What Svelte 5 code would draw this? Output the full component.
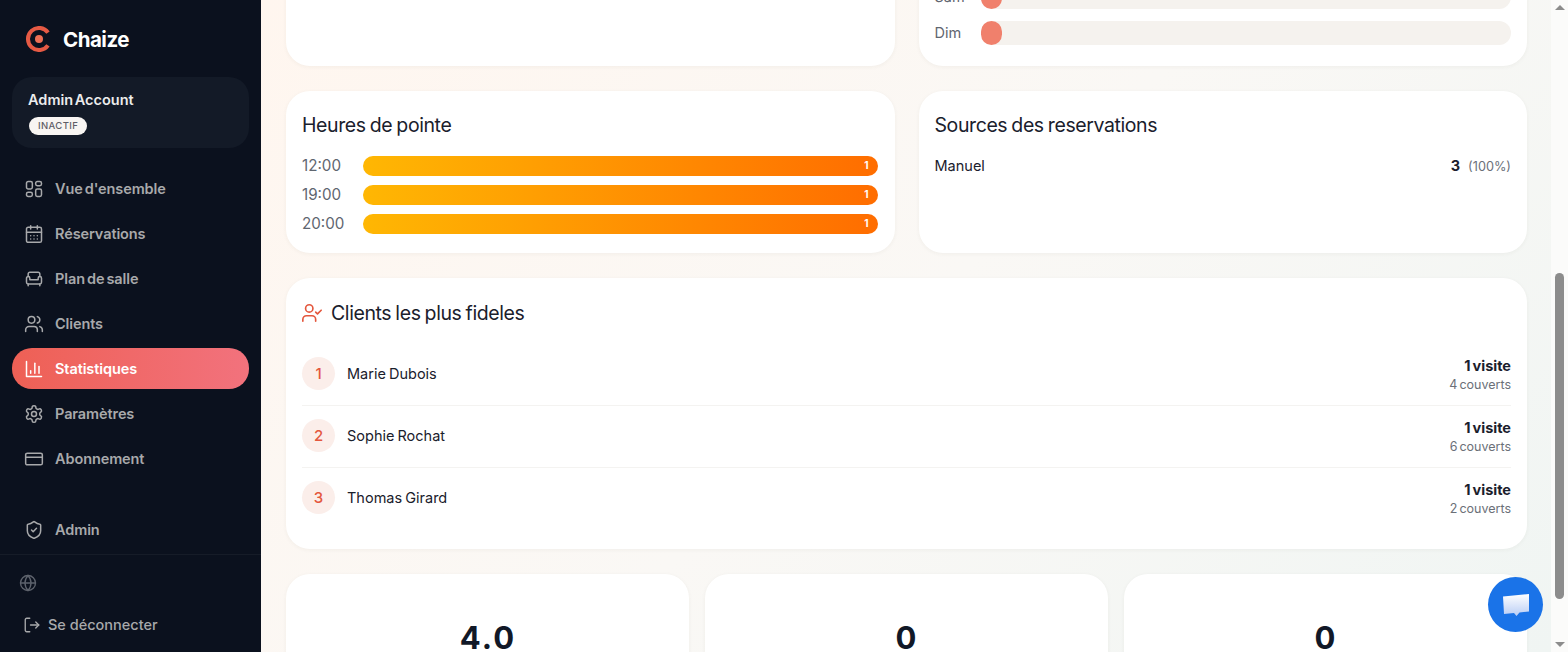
<script>
  const hours = ['12:00', '19:00', '20:00'];
  const clients = [
    { rank: 1, name: 'Marie Dubois', covers: '4 couverts' },
    { rank: 2, name: 'Sophie Rochat', covers: '6 couverts' },
    { rank: 3, name: 'Thomas Girard', covers: '2 couverts' }
  ];
  const nav = [
    { label: "Vue d'ensemble", paths: [], rects: [[3,3,7,9],[14,3,7,5],[14,12,7,9],[3,16,7,5]] },
    { label: 'Réservations', paths: ['M8 2v4','M16 2v4','M3 10h18','M8 14h.01','M12 14h.01','M16 14h.01','M8 18h.01','M12 18h.01','M16 18h.01'], rects: [[3,4,18,18]] },
    { label: 'Plan de salle', paths: ['M19 9V6a2 2 0 0 0-2-2H7a2 2 0 0 0-2 2v3','M3 16a2 2 0 0 0 2 2h14a2 2 0 0 0 2-2v-5a2 2 0 0 0-4 0v2H7v-2a2 2 0 0 0-4 0Z','M5 18v2','M19 18v2'], rects: [] },
    { label: 'Clients', paths: ['M16 21v-2a4 4 0 0 0-4-4H6a4 4 0 0 0-4 4v2','M16 3.13a4 4 0 0 1 0 7.75','M22 21v-2a4 4 0 0 0-3-3.87','M13 7a4 4 0 1 1-8 0 4 4 0 0 1 8 0'], rects: [] },
    { label: 'Statistiques', active: true, paths: ['M3 3v18h18','M18 17V9','M13 17V5','M8 17v-3'], rects: [] },
    { label: 'Paramètres', paths: ['M12.22 2h-.44a2 2 0 0 0-2 2v.18a2 2 0 0 1-1 1.73l-.43.25a2 2 0 0 1-2 0l-.15-.08a2 2 0 0 0-2.73.73l-.22.38a2 2 0 0 0 .73 2.73l.15.1a2 2 0 0 1 1 1.72v.51a2 2 0 0 1-1 1.74l-.15.09a2 2 0 0 0-.73 2.73l.22.38a2 2 0 0 0 2.73.73l.15-.08a2 2 0 0 1 2 0l.43.25a2 2 0 0 1 1 1.73V20a2 2 0 0 0 2 2h.44a2 2 0 0 0 2-2v-.18a2 2 0 0 1 1-1.73l.43-.25a2 2 0 0 1 2 0l.15.08a2 2 0 0 0 2.73-.73l.22-.39a2 2 0 0 0-.73-2.73l-.15-.08a2 2 0 0 1-1-1.74v-.5a2 2 0 0 1 1-1.74l.15-.09a2 2 0 0 0 .73-2.73l-.22-.38a2 2 0 0 0-2.73-.73l-.15.08a2 2 0 0 1-2 0l-.43-.25a2 2 0 0 1-1-1.73V4a2 2 0 0 0-2-2z','M15 12a3 3 0 1 1-6 0 3 3 0 0 1 6 0'], rects: [] },
    { label: 'Abonnement', paths: ['M2 10h20'], rects: [[2,5,20,14]] }
  ];
</script>

<div class="app">
  <aside class="sidebar">
    <div class="brand">
      <svg class="logo" viewBox="0 0 26 26" fill="none">
        <path d="M22 6.7A11 11 0 1 0 22 19.3" stroke="#e65a44" stroke-width="4" />
        <circle cx="13" cy="13" r="4" fill="#ee6f55" />
      </svg>
      <span class="brand-name">Chaize</span>
    </div>
    <div class="account">
      <div class="account-name">Admin Account</div>
      <span class="badge">INACTIF</span>
    </div>
    <nav class="nav">
      {#each nav as item}
        <div class="nav-item" class:active={item.active}>
          <svg class="icon" viewBox="0 0 24 24">
            {#each item.rects as r}<rect x={r[0]} y={r[1]} width={r[2]} height={r[3]} rx="2" />{/each}
            {#each item.paths as d}<path {d} />{/each}
          </svg>
          <span>{item.label}</span>
        </div>
      {/each}
    </nav>
    <div class="nav-item admin">
      <svg class="icon" viewBox="0 0 24 24">
        <path d="M20 13c0 5-3.5 7.5-7.66 8.95a1 1 0 0 1-.67-.01C7.5 20.5 4 18 4 13V6a1 1 0 0 1 1-1c2 0 4.5-1.2 6.24-2.72a1.17 1.17 0 0 1 1.52 0C14.51 3.81 17 5 19 5a1 1 0 0 1 1 1z" />
        <path d="m9 12 2 2 4-4" />
      </svg>
      <span>Admin</span>
    </div>
    <div class="side-foot">
      <svg class="globe" viewBox="0 0 24 24">
        <circle cx="12" cy="12" r="10" />
        <path d="M12 2a14.5 14.5 0 0 0 0 20 14.5 14.5 0 0 0 0-20" />
        <path d="M2 12h20" />
      </svg>
      <div class="logout">
        <svg class="logout-icon" viewBox="0 0 24 24">
          <path d="M9 21H5a2 2 0 0 1-2-2V5a2 2 0 0 1 2-2h4" />
          <path d="M10 12h11" />
          <path d="m17 8 4 4-4 4" />
        </svg>
        <span>Se déconnecter</span>
      </div>
    </div>
  </aside>

  <main class="main">
    <div class="content">
      <section class="grid-2 first-row">
        <div class="card"></div>
        <div class="card days">
          <div class="day"><span class="day-label">Sam</span><div class="track"><div class="fill"></div></div></div>
          <div class="day"><span class="day-label">Dim</span><div class="track"><div class="fill"></div></div></div>
        </div>
      </section>

      <section class="grid-2">
        <div class="card peak">
          <h3>Heures de pointe</h3>
          <div class="hours">
            {#each hours as h}
              <div class="hour">
                <span class="hour-label">{h}</span>
                <div class="bar"><span>1</span></div>
              </div>
            {/each}
          </div>
        </div>
        <div class="card peak">
          <h3>Sources des reservations</h3>
          <div class="source">
            <span>Manuel</span>
            <span class="source-val"><b>3</b><small>(100%)</small></span>
          </div>
        </div>
      </section>

      <section class="card loyal">
        <h3 class="with-icon">
          <svg class="title-icon" viewBox="0 0 24 24">
            <path d="M16 21v-2a4 4 0 0 0-4-4H6a4 4 0 0 0-4 4v2" />
            <path d="M13 7a4 4 0 1 1-8 0 4 4 0 0 1 8 0" />
            <path d="m16 11 2 2 4-4" />
          </svg>
          Clients les plus fideles
        </h3>
        <div class="clients">
          {#each clients as c}
            <div class="client">
              <span class="rank">{c.rank}</span>
              <span class="client-name">{c.name}</span>
              <div class="visits">
                <b>1 visite</b>
                <small>{c.covers}</small>
              </div>
            </div>
          {/each}
        </div>
      </section>

      <section class="grid-3">
        <div class="card stat">4.0</div>
        <div class="card stat">0</div>
        <div class="card stat">0</div>
      </section>
    </div>

    <button class="chat" aria-label="Chat">
      <svg viewBox="0 0 32 32" width="32" height="32">
        <defs>
          <linearGradient id="bubble" x1="0" y1="0" x2="0" y2="1">
            <stop offset="0" stop-color="#ffffff" />
            <stop offset="1" stop-color="#b9cdf5" />
          </linearGradient>
        </defs>
        <path d="M3 7.5 29 5v17.5L19.5 23.5 16.5 27 14 24 4 25z" fill="url(#bubble)" />
      </svg>
    </button>
  </main>

  <div class="scrollbar">
    <span class="arrow up"></span>
    <div class="thumb-area"><div class="thumb"></div></div>
    <span class="arrow down"></span>
  </div>
</div>

<style>
  :global(body) {
    margin: 0;
    background: #fff;
  }
  .app {
    display: flex;
    width: 1568px;
    height: 652px;
    overflow: hidden;
    font-family: Inter, "Noto Sans", sans-serif;
    color: #1a202c;
  }
  .sidebar {
    flex: 0 0 261px;
    box-sizing: border-box;
    height: 652px;
    background: #0b111e;
    display: flex;
    flex-direction: column;
    padding: 0 12px;
  }
  .brand {
    display: flex;
    align-items: center;
    gap: 11px;
    height: 77px;
    padding-left: 14px;
    box-sizing: border-box;
  }
  .logo {
    width: 26px;
    height: 26px;
  }
  .brand-name {
    color: #fff;
    font-size: 20.5px;
    font-weight: 700;
    letter-spacing: -0.5px;
    margin-top: 2px;
  }
  .account {
    height: 71px;
    box-sizing: border-box;
    background: #131a27;
    border-radius: 20px;
    padding: 13px 16px;
  }
  .account-name {
    color: #ececec;
    font-size: 14.5px;
    font-weight: 600;
    line-height: 20px;
    word-spacing: -2px;
  }
  .badge {
    display: inline-block;
    margin: 7px 0 0 1px;
    background: #f8f5f2;
    color: #5e5e66;
    border-radius: 10px;
    font-size: 9.5px;
    font-weight: 500;
    line-height: 18px;
    padding: 0 9px;
    letter-spacing: 0.4px;
  }
  .nav {
    display: flex;
    flex-direction: column;
    gap: 4px;
    margin-top: 20px;
  }
  .nav-item {
    height: 41px;
    display: flex;
    align-items: center;
    gap: 11px;
    padding-left: 12px;
    border-radius: 20px;
    color: #a8a9ab;
    font-size: 14.5px;
    font-weight: 600;
    letter-spacing: -0.1px;
    word-spacing: -1.5px;
  }
  .nav-item.active {
    color: #fff;
    background: linear-gradient(90deg, #ee6055, #f2727d);
  }
  .admin {
    margin-top: 30px;
  }
  .icon,
  .globe,
  .logout-icon,
  .title-icon {
    fill: none;
    stroke: currentColor;
    stroke-width: 1.8;
    stroke-linecap: round;
    stroke-linejoin: round;
    flex: none;
  }
  .icon {
    width: 20px;
    height: 20px;
  }
  .side-foot {
    margin: 4px -12px 0;
    border-top: 1px solid #161c28;
    padding: 19px 0 0 19px;
    color: #a8a9ab;
  }
  .globe {
    display: block;
    width: 18px;
    height: 18px;
    color: #5e636d;
  }
  .logout {
    display: flex;
    align-items: center;
    gap: 7px;
    margin-top: 23px;
    padding-left: 4px;
    font-size: 14.5px;
    font-weight: 500;
    line-height: 20px;
  }
  .logout-icon {
    width: 18px;
    height: 18px;
  }

  .main {
    position: relative;
    flex: 1;
    min-width: 0;
    overflow: hidden;
    background: linear-gradient(135deg, #fff6ef 0%, #faf8f5 50%, #f0f5f3 100%);
  }
  .content {
    display: flex;
    flex-direction: column;
    gap: 25px;
    padding: 0 24px 0 25px;
    margin-top: -234px;
  }
  .grid-2 {
    display: grid;
    grid-template-columns: 1fr 1fr;
    gap: 24px;
  }
  .grid-3 {
    display: grid;
    grid-template-columns: repeat(3, 1fr);
    gap: 16px;
  }
  .card {
    background: #fff;
    border-radius: 24px;
    box-shadow: 0 1px 4px rgba(60, 50, 40, 0.05);
    box-sizing: border-box;
  }
  .first-row .card {
    height: 300px;
  }
  .days {
    display: flex;
    flex-direction: column;
    justify-content: flex-end;
    gap: 12px;
    padding: 0 16px 21px 16px;
  }
  .day {
    display: flex;
    align-items: center;
    height: 24px;
  }
  .day-label {
    width: 46px;
    flex: none;
    color: #5f6670;
    font-size: 14.5px;
    padding-bottom: 2px;
  }
  .track {
    flex: 1;
    height: 24px;
    background: #f5f2ee;
    border-radius: 12px;
  }
  .fill {
    width: 21px;
    height: 24px;
    background: #f0806c;
    border-radius: 12px;
  }
  .peak {
    height: 162px;
    padding: 22px 16px 0 16px;
  }
  h3 {
    margin: 0;
    font-size: 19.5px;
    font-weight: 400;
    line-height: 24px;
    letter-spacing: -0.4px;
    word-spacing: -1px;
    color: #1a202c;
  }
  .hours {
    margin-top: 19px;
    display: flex;
    flex-direction: column;
    gap: 9px;
  }
  .hour {
    display: flex;
    align-items: center;
    height: 20px;
  }
  .hour-label {
    width: 61px;
    flex: none;
    color: #5f6670;
    font-size: 15.2px;
    padding-bottom: 2px;
  }
  .bar {
    flex: 1;
    height: 20px;
    margin-right: 1px;
    padding-bottom: 2px;
    box-sizing: border-box;
    border-radius: 10px;
    background: linear-gradient(90deg, #ffb703, #ff6d00);
    display: flex;
    align-items: center;
    justify-content: flex-end;
    padding-right: 9px;
    color: #fff;
    font-size: 10px;
    font-weight: 700;
  }
  .source {
    margin-top: 18px;
    display: flex;
    justify-content: space-between;
    align-items: center;
    height: 20px;
    font-size: 14.5px;
    font-weight: 400;
  }
  .source-val b {
    font-size: 14.5px;
    font-weight: 700;
  }
  .source-val small {
    margin-left: 8px;
    color: #6b7078;
    font-size: 12.7px;
    font-weight: 400;
  }
  .loyal {
    height: 271px;
    padding: 23px 16px 0 16px;
  }
  .with-icon {
    display: flex;
    align-items: center;
    gap: 8px;
  }
  .title-icon {
    width: 22px;
    height: 22px;
    margin-left: -1px;
    color: #e4573d;
  }
  .clients {
    margin-top: 19px;
  }
  .client {
    display: flex;
    align-items: center;
    height: 62px;
    padding-bottom: 2px;
    box-sizing: border-box;
    border-bottom: 1px solid #f4f3f1;
  }
  .client:last-child {
    border-bottom-color: transparent;
  }
  .rank {
    width: 33px;
    height: 33px;
    flex: none;
    border-radius: 50%;
    background: #fbeeea;
    color: #e4573d;
    display: flex;
    align-items: center;
    justify-content: center;
    font-size: 15px;
    font-weight: 500;
  }
  .client-name {
    margin-left: 12px;
    font-size: 14.5px;
    font-weight: 400;
    word-spacing: -1px;
  }
  .visits {
    margin-left: auto;
    margin-top: 2px;
    display: flex;
    flex-direction: column;
    align-items: flex-end;
    gap: 1px;
  }
  .visits b {
    font-size: 14.5px;
    font-weight: 700;
    line-height: 19px;
    word-spacing: -1.5px;
  }
  .visits small {
    color: #6b7078;
    font-size: 12.5px;
    line-height: 17px;
    word-spacing: -1.5px;
  }
  .stat {
    height: 120px;
    padding: 44px 0 0 1px;
    text-align: center;
    font-size: 31px;
    font-weight: 700;
    line-height: 40px;
    letter-spacing: 2px;
    color: #111827;
  }
  .chat {
    position: absolute;
    left: 1227px;
    top: 577px;
    width: 55px;
    height: 55px;
    border: 0;
    padding: 0;
    border-radius: 50%;
    background: #1a73e8;
    display: flex;
    align-items: center;
    justify-content: center;
  }
  .scrollbar {
    flex: 0 0 17px;
    background: #fbfbfa;
    display: flex;
    flex-direction: column;
    align-items: center;
    height: 652px;
  }
  .thumb-area {
    flex: 1;
    width: 100%;
    display: flex;
    flex-direction: column;
    justify-content: flex-end;
    padding-bottom: 38px;
    box-sizing: border-box;
    align-items: center;
  }
  .thumb {
    width: 9px;
    height: 326px;
    border-radius: 5px;
    background: #8c8c8c;
  }
  .arrow {
    width: 0;
    height: 0;
    margin: 5px 0;
    border-left: 5px solid transparent;
    border-right: 5px solid transparent;
  }
  .arrow.up {
    border-bottom: 5px solid #8c8c8c;
  }
  .arrow.down {
    border-top: 5px solid #8c8c8c;
  }
</style>
